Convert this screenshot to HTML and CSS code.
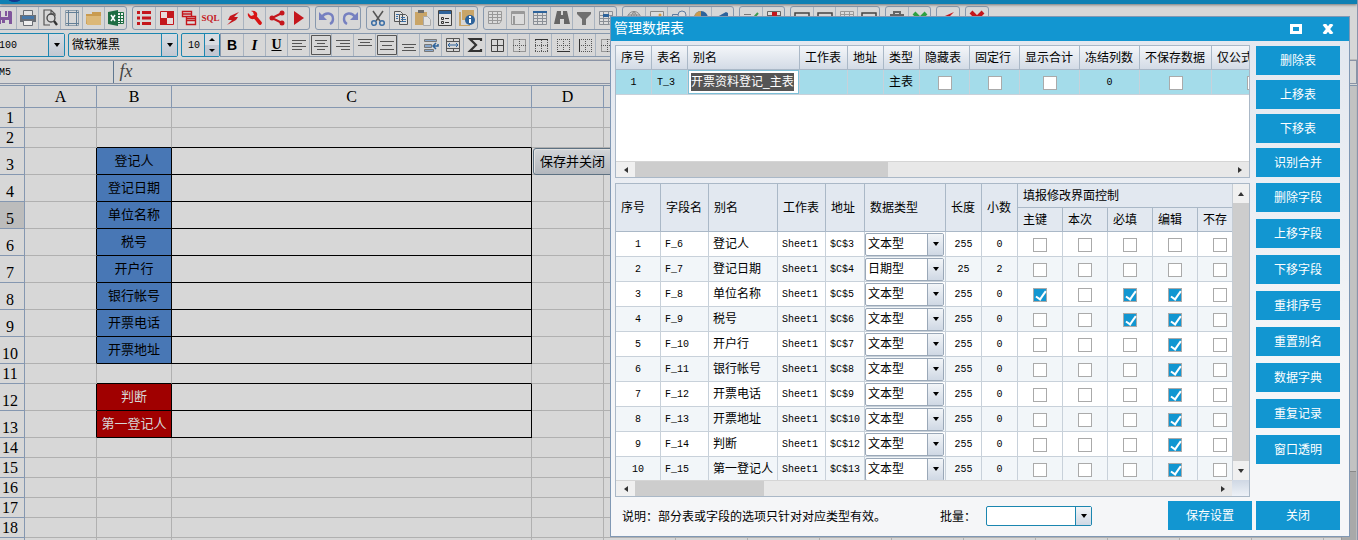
FILE: index.html
```html
<!DOCTYPE html>
<html lang="zh-CN">
<head>
    <meta charset="UTF-8">
    <meta name="viewport" content="width=device-width, initial-scale=1.0">
    <title>管理数据表</title>
    <link rel="stylesheet" href="styles.css">
</head>
<body>
    <!-- icon set -->
    <svg class="sprite" aria-hidden="true">
        <symbol id="save" viewBox="0 0 20 20"><path fill="#80569c" d="M3 3h13l1 1v12H3z"/><path fill="#d8d8d8" d="M6 3h7v6H6zM6 12h8v4H6z"/><path fill="#80569c" d="M10 3h2v5h-2zM7 12h3v3H7z"/></symbol>
        <symbol id="print" viewBox="0 0 20 20"><path fill="#6b6f75" d="M2 7h16v7H2z"/><path fill="#e4e4e4" stroke="#6b6f75" d="M5.5 2.500h9v5h-9z"/><path fill="#4577a8" d="M4 8h12v3H4z"/><path fill="#eee" stroke="#6b6f75" d="M5.500 12.500h9v5h-9z"/></symbol>
        <symbol id="preview" viewBox="0 0 20 20"><path fill="none" stroke="#555" stroke-width="1.200" d="M15 8V6l-4-4H4v15h6M11 2v4h4"/><circle cx="11" cy="10" r="4" fill="#d8d8d8" stroke="#444" stroke-width="1.300"/><path stroke="#333" stroke-width="2.400" d="m14 13 3 4"/></symbol>
        <symbol id="frame" viewBox="0 0 20 20"><path fill="none" stroke="#8fa0ae" d="M3.500 2.500h13v15h-13z"/><path fill="none" stroke="#637f96" d="M6.500 2v16M14.500 2v16M4 4.500h13M4 15.500h13"/></symbol>
        <symbol id="folder" viewBox="0 0 20 20"><path fill="#c99b50" d="M8 4h9v4H8zM2 6h8l1 2h6v8H2z"/><path fill="#dcb878" d="M2 8h15v9H3z"/></symbol>
        <symbol id="excel" viewBox="0 0 20 20"><path fill="#f3f3f3" stroke="#1e6c42" d="M9.500 4.500h8v11h-8z"/><path stroke="#1e6c42" d="M10 7.500h7M10 10.500h7M10 13.500h7M14.500 5v10"/><path fill="#1e6c42" d="m2 4 10-2v16L2 16z"/><path stroke="#fff" stroke-width="1.500" d="m5 7 4 6M9 7l-4 6"/></symbol>
        <symbol id="list" viewBox="0 0 20 20"><path fill="#c4161c" d="M3 3h3v3H3zM8 3h9v3H8zM3 8.500h3v3H3zM8 8.500h9v3H8zM3 14h3v3H3zM8 14h9v3H8z"/></symbol>
        <symbol id="checker" viewBox="0 0 20 20"><path fill="#e8dada" stroke="#c4161c" d="M3.500 3.500h13v13h-13z"/><path fill="#c4161c" d="M10 3h7v7h-7zM3 10h7v7H3z"/></symbol>
        <symbol id="stack" viewBox="0 0 20 20"><g fill="#ddd" stroke="#c4161c" stroke-width="1.400"><path d="M3.500 3.500h9v5h-9zM7.500 8.500h9v4h-9zM7.500 12.500h9v4h-9zM3.500 6h9M7.500 10.500h9"/></g></symbol>
        <symbol id="bolt" viewBox="0 0 20 20"><path fill="#c4161c" d="m16 4-9 4-2 4h4l-5 5 9-5 2-3h-4z"/></symbol>
        <symbol id="wrench" viewBox="0 0 20 20"><path fill="none" stroke="#d81414" stroke-width="3.600" stroke-linecap="round" d="m10 9 5 6"/><path fill="#d81414" d="M3 5l3 3 3-1-1-3-2-1c5-1 7 2 6 5l-3 3C5 12 2 8 3 5z"/></symbol>
        <symbol id="share" viewBox="0 0 20 20"><path fill="none" stroke="#c4161c" stroke-width="2" d="m15 5-10 5 10 5"/><g fill="#c4161c"><circle cx="15" cy="5" r="2.500"/><circle cx="5" cy="10" r="2.500"/><circle cx="15" cy="15" r="2.500"/></g></symbol>
        <symbol id="play" viewBox="0 0 20 20"><path fill="#c4161c" d="m5 3 10 7-10 7z"/></symbol>
        <symbol id="undo" viewBox="0 0 20 20"><path fill="none" stroke="#7680c0" stroke-width="2.400" d="M5 9c3-5 11-5 11 2 0 2-1 4-3 5"/><path fill="#7680c0" d="M2 4v8h8z"/></symbol>
        <symbol id="redo" viewBox="0 0 20 20"><path fill="none" stroke="#7680c0" stroke-width="2.400" d="M15 9C12 4 4 4 4 11c0 2 1 4 3 5"/><path fill="#7680c0" d="M18 4v8h-8z"/></symbol>
        <symbol id="cut" viewBox="0 0 20 20"><path stroke="#555" stroke-width="1.500" d="m5 3 7 10M15 3 8 13"/><g fill="none" stroke="#3a6ea5" stroke-width="1.500"><circle cx="6" cy="15" r="2.300"/><circle cx="14" cy="15" r="2.300"/></g></symbol>
        <symbol id="copy" viewBox="0 0 20 20"><g fill="#e2e2e2" stroke="#555"><path d="M3.500 3.500h6l2 2v8h-8zM8.500 6.500h6l2 2v8h-8z"/></g><path stroke="#3a6ea5" d="M5 6.500h3M5 8.500h2M5 10.500h2M10 9.500h4M10 11.500h5M10 13.500h5"/></symbol>
        <symbol id="paste" viewBox="0 0 20 20"><path fill="#c9a568" d="M2 4h12v13H2z"/><path fill="#6b6b6b" d="M5 2h6v3H5z"/><path fill="#e2e2e2" stroke="#aaa" d="M10.500 8.500h4l3 3v6h-7z"/></symbol>
        <symbol id="props" viewBox="0 0 20 20"><path fill="#e0e0e0" stroke="#444" d="M3.500 2.500h13v15h-13z"/><path fill="#2e639b" d="M4 3h12v3H4z"/><path stroke="#333" d="M10 10.500h4M10 14.500h4"/><path fill="none" stroke="#333" d="M6.500 9.500h2v2h-2zM6.500 13.500h2v2h-2z"/></symbol>
        <symbol id="info" viewBox="0 0 20 20"><path fill="#c9a568" d="M5 2h12v10H5zM2 4h2v13h9v1H2z"/><circle cx="13" cy="12" r="5" fill="#2e639b"/><path fill="#fff" d="M12 8h2v2h-2zM12 11h2v4h-2z"/></symbol>
        <symbol id="grid" viewBox="0 0 20 20"><path fill="#dcdcdc" stroke="#999" d="M3.500 3.500h13v9l-2 3h-11zM3.500 6.500h13M3.500 9.500h13M3.500 12.500h13M7.500 4v11M12.500 4v11"/></symbol>
        <symbol id="gridtop" viewBox="0 0 20 20"><path fill="#dcdcdc" stroke="#999" d="M3.500 3.500h13v13h-13z"/><path stroke="#999" stroke-width="2" d="M4 5h12M6 8v8"/></symbol>
        <symbol id="gridblue" viewBox="0 0 20 20"><path fill="#dcdcdc" stroke="#8a8f96" d="M3.500 3.500h13v13h-13zM3.500 7.500h13M3.500 10.500h13M3.500 13.500h13M7.500 4v12M12.500 4v12"/><path fill="#2e639b" d="M3 3h14v2H3z"/></symbol>
        <symbol id="gridcell" viewBox="0 0 20 20"><path fill="#dcdcdc" stroke="#8a8f96" d="M3.500 3.500h13v9l-3 4h-10zM3.500 7.500h13M3.500 10.500h13M3.500 13.500h11M7.500 4v12M12.500 4v12"/><path fill="#2e639b" d="M7 6h6v3H7z"/></symbol>
        <symbol id="find" viewBox="0 0 20 20"><path fill="#666" d="M5 3h4v4h2V3h4l3 13h-6v-5H8v5H2z"/></symbol>
        <symbol id="filter" viewBox="0 0 20 20"><path fill="#707070" d="M3 4h14v2l-5 5v6H8v-6L3 6z"/></symbol>
        <symbol id="globe" viewBox="0 0 20 20"><path fill="none" stroke="#888" d="M3.500 10a6.500 6.500 0 1 0 13 0 6.500 6.500 0 1 0-13 0M4 7h12M4 13h12M10 3.500v13M10 3.500c-4 4-4 9 0 13M10 3.500c4 4 4 9 0 13"/></symbol>
        <symbol id="image" viewBox="0 0 20 20"><path fill="#ddd" stroke="#888" d="M3.500 3.500h13v11h-13z"/><circle cx="13" cy="7" r="1.500" fill="#d89b40"/></symbol>
        <symbol id="shapes" viewBox="0 0 20 20"><path fill="none" stroke="#5c7ba0" d="M3.500 6.500h9v8h-9z"/><circle cx="13" cy="7" r="4" fill="#ddd" stroke="#5c7ba0"/></symbol>
        <symbol id="pie" viewBox="0 0 20 20"><circle cx="10" cy="10" r="7" fill="#2e639b"/><path fill="#c99b50" d="M10 10V3a7 7 0 0 0-7 7z"/></symbol>
        <symbol id="pen" viewBox="0 0 20 20"><path fill="#2e639b" d="m4 9 9-5 2 1v8H9z"/></symbol>
        <symbol id="tick" viewBox="0 0 20 20"><path fill="none" stroke="#3d9a50" stroke-width="2" d="m5 10 4 4 8-9"/><path stroke="#777" d="M3 6.500h7"/></symbol>
        <symbol id="palette" viewBox="0 0 20 20"><path fill="#ddd" stroke="#666" d="M3.500 3.500h13v11h-13zM3.500 7.500h13M8.500 3.500v11M12.500 3.500v11"/><path fill="#c4161c" d="M8 4h5v4H8z"/><path fill="#2e639b" d="M4 8h4v4H4z"/></symbol>
        <symbol id="box" viewBox="0 0 20 20"><path fill="none" stroke="#444" stroke-width="1.500" d="M3 5h14v10H3zM7 9h6"/></symbol>
        <symbol id="case" viewBox="0 0 20 20"><path fill="#666" d="M3 6h14v10H3z"/><path fill="none" stroke="#666" stroke-width="2" d="M7 6V4h6v2"/></symbol>
        <symbol id="crossgreen" viewBox="0 0 20 20"><path stroke="#2fa043" stroke-width="4" d="m4 5 12 12M16 5 4 17"/></symbol>
        <symbol id="crossred" viewBox="0 0 20 20"><path stroke="#c4161c" stroke-width="4" d="m4 4 12 12M16 4 4 16"/></symbol>
        <symbol id="al" viewBox="0 0 20 20"><path stroke="#555" d="M3 5.500h14M3 8.500h10M3 11.500h14M3 14.500h10"/></symbol>
        <symbol id="ac" viewBox="0 0 20 20"><path fill="none" stroke="#555" d="M.500.500h19v19H.500zM4 5.500h12M6 8.500h8M3 11.500h14M6 14.500h8"/></symbol>
        <symbol id="ar" viewBox="0 0 20 20"><path stroke="#555" d="M3 5.500h14M7 8.500h10M3 11.500h14M8 14.500h9"/></symbol>
        <symbol id="at" viewBox="0 0 20 20"><path stroke="#555" d="M3 4.500h14M5 7.500h10M3 10.500h14"/></symbol>
        <symbol id="am" viewBox="0 0 20 20"><path fill="none" stroke="#555" d="M.500.500h19v19H.500zM3 6.500h14M5 10.500h10M3 14.500h14"/></symbol>
        <symbol id="ab" viewBox="0 0 20 20"><path stroke="#555" d="M3 9.500h14M5 12.500h10M3 15.500h14"/></symbol>
        <symbol id="wrap" viewBox="0 0 20 20"><path fill="#8aa8cc" stroke="#777" d="M3.500 4.500h12v2h-12zM3.500 9.500h7v3h-7zM3.500 14.500h9v2h-9z"/><path fill="none" stroke="#2e639b" stroke-width="1.500" d="M17 9v2h-5m3-3-3 3 3 3"/></symbol>
        <symbol id="merge" viewBox="0 0 20 20"><path fill="none" stroke="#555" d="M3.500 3.500h13v13h-13zM3.500 6.500h13M3.500 13.500h13M10.500 3v3M10.500 14v3"/><path stroke="#2e639b" fill="none" d="M5 10h10M7 8l-2 2 2 2M13 8l2 2-2 2"/></symbol>
        <symbol id="sum" viewBox="0 0 20 20"><path fill="none" stroke="#333" stroke-width="2.200" d="M16 6V4H5l6 6-6 6h11v-2"/></symbol>
        <symbol id="ball" viewBox="0 0 20 20"><path fill="none" stroke="#444" d="M4.500 4.500h12v12h-12zM4.500 10.500h12M10.500 4.500v12"/></symbol>
        <symbol id="bnone" viewBox="0 0 20 20"><path fill="none" stroke="#555" stroke-dasharray="1 1" d="M4.500 4.500h12v12h-12zM4 10.500h13M10.500 4v13"/></symbol>
        <symbol id="btop" viewBox="0 0 20 20"><path stroke="#333" d="M4 4.500h13"/><path fill="none" stroke="#555" stroke-dasharray="1 1" d="M4.500 5v12M4 16.500h13M16.500 5v12M4 10.500h13M10.500 5v12"/></symbol>
        <symbol id="bbot" viewBox="0 0 20 20"><path stroke="#333" d="M4 16.500h13"/><path fill="none" stroke="#555" stroke-dasharray="1 1" d="M4.500 4v12M4 4.500h13M16.500 4v12M4 10.500h13M10.500 4v12"/></symbol>
        <symbol id="bleft" viewBox="0 0 20 20"><path stroke="#333" d="M4.500 4v13"/><path fill="none" stroke="#555" stroke-dasharray="1 1" d="M6 4.500h11M6 16.500h11M16.500 4v13M6 10.500h11M10.500 4v13"/></symbol>
    </svg>

    <div class="app">
        <div class="topbar"></div>

        <div class="toolbar toolbar-main" id="mainTools"></div>

        <div class="toolbar toolbar-format">
            <span class="combo combo-zoom"><select aria-label="缩放"><option>100</option></select></span>
            <span class="combo combo-font"><select aria-label="字体"><option>微软雅黑</option></select></span>
            <span class="spin"><input type="text" value="10" aria-label="字号"><span class="spin-arrows"></span></span>
            <div class="group" id="formatTools">
                <button class="bold">B</button>
                <button class="italic">I</button>
                <button class="underline">U</button>
            </div>
        </div>

        <div class="formula">
            <input class="name-box" type="text" value="M5" aria-label="名称框">
            <span class="fx">fx</span>
            <input class="formula-input" type="text" aria-label="公式">
        </div>

        <div class="sheet">
            <div class="sheet-view">
                <table class="cells" id="cells"></table>
            </div>
            <div class="sheet-scroll"><div class="sheet-thumb"></div></div>
        </div>
    </div>

    <div class="dialog">
        <div class="dialog-title">
            <h1>管理数据表</h1>
            <button class="win-btn" aria-label="最大化"><svg width="12" height="10" viewBox="0 0 12 10"><path fill="none" stroke="#fff" stroke-width="3" d="M1.500 1.500h9v7h-9z"/></svg></button>
            <button class="win-btn" aria-label="关闭窗口"><svg width="12" height="10" viewBox="0 0 12 10"><path stroke="#fff" stroke-width="3.500" d="m2 0 8 10M10 0 2 10"/></svg></button>
        </div>
        <div class="dialog-body">
            <div class="panels">
                <div class="panel">
                    <div class="view view-tables">
                        <table class="data tables">
                            <colgroup>
                                <col class="w36"><col class="w36"><col class="w112"><col class="w48"><col class="w36"><col class="w36">
                                <col class="w50"><col class="w50"><col class="w60"><col class="w60"><col class="w72"><col class="w84">
                            </colgroup>
                            <thead>
                                <tr><th>序号</th><th>表名</th><th>别名</th><th>工作表</th><th>地址</th><th>类型</th><th>隐藏表</th><th>固定行</th><th>显示合计</th><th>冻结列数</th><th>不保存数据</th><th>仅公式</th></tr>
                            </thead>
                            <tbody>
                                <tr>
                                    <td class="num">1</td>
                                    <td class="code">T_3</td>
                                    <td class="edit"><div class="edit-box"><span>开票资料登记_主表</span></div></td>
                                    <td></td>
                                    <td></td>
                                    <td>主表</td>
                                    <td class="check"><input type="checkbox" aria-label="隐藏表"></td>
                                    <td class="check"><input type="checkbox" aria-label="固定行"></td>
                                    <td class="check"><input type="checkbox" aria-label="显示合计"></td>
                                    <td class="num">0</td>
                                    <td class="check"><input type="checkbox" aria-label="不保存数据"></td>
                                    <td class="check"><input type="checkbox" aria-label="仅公式"></td>
                                </tr>
                            </tbody>
                        </table>
                    </div>
                    <div class="hscroll"><span class="arrow left"></span><div class="thumb thumb-wide"></div><span class="arrow right"></span></div>
                </div>

                <div class="panel panel-fields">
                    <div class="view view-fields">
                        <table class="data fields">
                            <colgroup>
                                <col class="w45"><col class="w48"><col class="w69"><col class="w48"><col class="w39"><col class="w81"><col class="w36"><col class="w36">
                                <col class="w45"><col class="w45"><col class="w45"><col class="w45"><col class="w45">
                            </colgroup>
                            <thead>
                                <tr>
                                    <th rowspan="2">序号</th><th rowspan="2">字段名</th><th rowspan="2">别名</th><th rowspan="2">工作表</th><th rowspan="2">地址</th><th rowspan="2">数据类型</th><th rowspan="2">长度</th><th rowspan="2">小数</th>
                                    <th colspan="5">填报修改界面控制</th>
                                </tr>
                                <tr><th>主键</th><th>本次</th><th>必填</th><th>编辑</th><th>不存</th></tr>
                            </thead>
                            <tbody id="fieldRows"></tbody>
                        </table>
                    </div>
                    <div class="vscroll"><span class="arrow up"></span><div class="thumb"></div><span class="arrow down"></span></div>
                    <div class="hscroll"><span class="arrow left"></span><div class="thumb thumb-short"></div><span class="arrow right"></span></div>
                    <div class="corner"></div>
                </div>
            </div>

            <div class="actions">
                <div class="actions-table">
                    <button class="btn">删除表</button>
                    <button class="btn">上移表</button>
                    <button class="btn">下移表</button>
                    <button class="btn">识别合并</button>
                </div>
                <div class="actions-field">
                    <button class="btn">删除字段</button>
                    <button class="btn">上移字段</button>
                    <button class="btn">下移字段</button>
                    <button class="btn">重排序号</button>
                    <button class="btn">重置别名</button>
                    <button class="btn">数据字典</button>
                    <button class="btn">重复记录</button>
                    <button class="btn">窗口透明</button>
                </div>
            </div>

            <div class="footer">
                <p>说明：部分表或字段的选项只针对对应类型有效。</p>
                <label for="batch">批量：</label>
                <span class="combo combo-batch"><select id="batch"><option></option></select></span>
                <button class="btn btn-save">保存设置</button>
            </div>
            <button class="btn btn-close">关闭</button>
        </div>
    </div>

    <script src="script.js"></script>
</body>
</html>
```
FILE: styles.css
```css
* { margin: 0; padding: 0; box-sizing: border-box; }
body { height: 100vh; overflow: hidden; background: #d7d7d7; font: 12px "Liberation Sans", "Noto Sans CJK SC", sans-serif; color: #000; }
button, input, select { font: inherit; color: inherit; background: none; border: none; border-radius: 0; outline: none; }
table { border-spacing: 0; table-layout: fixed; }
.sprite { position: absolute; width: 0; height: 0; }

/* main window */
.app { height: 100vh; display: flex; flex-direction: column; overflow: hidden; border-right: 1px solid #8a93ab; }
.topbar { position: relative; flex: none; height: 4px; background: #0f80b3; box-shadow: 0 1px 3px #777; overflow: hidden; }
.topbar::before { content: ""; position: absolute; left: 7px; top: -9px; width: 15px; height: 11px; border-radius: 50%; background: #12378c; }
.toolbar { display: flex; flex: none; height: 24px; }
.toolbar-main { margin: 2px 0 0 -7px; gap: 5px; }
.toolbar-format { margin: 3px 0 3px -5px; gap: 3px; }
.group { display: flex; flex: none; border: 1px solid #8798ad; border-radius: 3px; }
.group button { width: 22px; height: 22px; display: flex; align-items: center; justify-content: center; border-left: 1px solid #a9b3bf; }
.group button:first-child { border-left: none; }
.group svg { width: 20px; height: 20px; flex: none; }
.group .sql { font: bold 9px "Liberation Serif", serif; color: #c4161c; }
.group .bold { font: bold 14px "Liberation Sans", sans-serif; }
.group .italic { font: italic bold 15px "Liberation Serif", serif; }
.group .underline { font: bold 14px "Liberation Serif", serif; text-decoration: underline; }
#formatTools { margin-left: -3px; border-radius: 0; }

.combo { position: relative; display: inline-flex; flex: none; border: 1px solid #1b86b0; border-radius: 2px; }
.combo select { appearance: none; width: 100%; padding: 0 16px 0 3px; }
.combo::after { content: ""; position: absolute; top: 0; right: 0; bottom: 0; width: 15px; border-left: 1px solid #1b86b0; background: linear-gradient(#d8dde3, #c2c8d2); pointer-events: none; }
.combo::before { content: ""; position: absolute; z-index: 1; top: calc(50% - 2px); right: 4px; border: 3px solid transparent; border-top: 4px solid #000; border-bottom: none; pointer-events: none; }
.combo-zoom { width: 70px; font: 10px "Liberation Mono", monospace; }
.combo-font { width: 110px; }
.spin { display: flex; width: 39px; border: 1px solid #1b86b0; border-radius: 2px; }
.spin input { width: 22px; padding-left: 6px; font: 10px "Liberation Mono", monospace; }
.spin-arrows { position: relative; flex: 1; border-left: 1px solid #1b86b0; background: linear-gradient(#d8dde3 50%, #c2c8d2 50%); }
.spin-arrows::before, .spin-arrows::after { content: ""; position: absolute; left: 4px; border: 3px solid transparent; }
.spin-arrows::before { top: 4px; border-top: none; border-bottom: 3px solid #000; }
.spin-arrows::after { bottom: 4px; border-bottom: none; border-top: 3px solid #000; }

.formula { display: flex; flex: none; height: 24px; margin-bottom: 1px; border: 1px solid #8a93a5; border-left: none; box-shadow: 0 -1px 0 #bbb; }
.name-box { width: 115px; margin-left: -1px; border-right: 1px solid #607890; font: 10px "Liberation Mono", monospace; }
.fx { width: 24px; text-align: center; font: italic 18px/20px "Liberation Serif", serif; color: #444; }
.formula-input { flex: 1; min-width: 0; }

.sheet { flex: 1; min-height: 0; display: flex; border-top: 1px solid #7f93ab; }
.sheet-view { flex: 1; min-width: 0; overflow: hidden; }
.sheet-scroll { width: 16px; background: #c2c2c2; border-left: 1px solid #999; border-right: 1px solid #bbb; }
.sheet-thumb { height: 386px; border-bottom: 1px solid #888; box-shadow: 0 90px 0 #a9a9a9; }
.cells { width: 1396px; }
.cells th { height: 22px; border-right: 1px solid #8597b0; border-bottom: 1px solid #8597b0; font: 16px "Liberation Serif", serif; }
.cells tbody th { height: 20px; padding-right: 4px; line-height: 18px; vertical-align: bottom; }
.cells tbody th.current { background: #bcbcbc; }
.cells td { height: 20px; border-right: 1px solid #b0b0b0; border-bottom: 1px solid #b0b0b0; font-size: 13px; line-height: 18px; text-align: center; white-space: nowrap; }
.cells .tall th, .cells .tall td { height: 27px; }
.cells .box-b, .cells .edge-b { border-bottom-color: #000; }
.cells .box-r { border-right-color: #000; }
.cells .blue { background: #4877b5; }
.cells .red { background: #a00000; color: #d7d7d7; }
.cells .host { position: relative; }
.cell-btn { position: absolute; left: 1px; top: 0; width: 90px; height: 27px; padding-left: 6px; text-align: left; border: 1px solid #5d7182; border-radius: 3px; background: linear-gradient(#d2d5d8, #b3b7bd); box-shadow: inset 1px 1px 0 #e0e0e0; }
.c25 { width: 25px; }
.c72 { width: 72px; }
.c75 { width: 75px; }
.c360 { width: 360px; }

/* dialog */
.dialog { position: absolute; top: 16px; left: 610px; right: 8px; border: 1px solid #8098b4; background: linear-gradient(#e2e7ef, #f5f6f8 70%); }
.dialog-title { display: flex; align-items: center; height: 24px; padding: 0 15px 0 3px; gap: 20px; background: #1296d1; color: #fff; }
.dialog-title h1 { flex: 1; font-size: 14px; line-height: 20px; padding-bottom: 2px; font-weight: normal; }
.win-btn { width: 12px; height: 10px; display: flex; }
.dialog-body { display: grid; grid-template-columns: minmax(0, 1fr) 84px; gap: 4px 6px; padding: 4px 9px 6px 4px; }
.panels { display: flex; flex-direction: column; gap: 5px; min-width: 0; }
.panel { border: 1px solid #aab8c7; background: #fff; }
.panel-fields { display: grid; grid-template-columns: minmax(0, 1fr) 17px; }
.view { overflow: hidden; }
.view-tables { height: 115px; }
.view-fields { height: 296px; }
.data { line-height: 18px; white-space: nowrap; }
.data th { padding-left: 5px; border-right: 1px solid #aab8c7; border-bottom: 1px solid #aab8c7; font-weight: normal; text-align: left; }
.data td { height: 25px; padding-left: 4px; border-right: 1px solid #c8d1da; border-bottom: 1px solid #c8d1da; }
.data .num, .data .check { padding-left: 0; text-align: center; }
.data .num, .data .code { font: 10px "Liberation Mono", monospace; }
.tables { width: 680px; }
.tables th { height: 24px; background: linear-gradient(#f4f6f9, #d3dbe6); }
.tables td { padding-left: 5px; background: #a4dcea; }
.tables .edit { padding: 0; }
.edit-box { height: 24px; padding: 2px; border: 1px solid #7cc0d8; background: #fff; }
.edit-box span { display: inline-block; background: #555; color: #fff; }
.fields { width: 627px; }
.fields th { height: 24px; background: #e2e8f0; }
.fields tbody tr:nth-child(even) { background: #f2f6f9; }
.fields .type { padding: 0; }
.fields .combo { width: 79px; height: 23px; display: flex; border-color: #9aa8b8; background: #fff; }
.fields .combo select { padding-left: 2px; }
.combo-batch { width: 106px; height: 20px; background: #fff; }
.fields .combo::after, .combo-batch::after { background: linear-gradient(#f2f5f8, #cfd8e4); }
.fields .combo::after { border-color: #9aa8b8; }

input[type="checkbox"] { appearance: none; position: relative; width: 14px; height: 14px; border: 1px solid #aaa; background: #fff; vertical-align: middle; }
input[type="checkbox"]:checked { background: #1296d1; }
input[type="checkbox"]:checked::after { content: ""; position: absolute; left: 4px; top: 0; width: 4px; height: 9px; border: solid #fff; border-width: 0 2px 2px 0; transform: rotate(35deg); }

.hscroll { display: flex; height: 16px; border-top: 1px solid #d5d5d5; background: #e8e8e8; }
.vscroll { display: flex; flex-direction: column; border-left: 1px solid #c5ccd4; background: #e8e8e8; }
.vscroll .thumb { flex: 1; }
.thumb { background: #cdcdcd; }
.thumb-wide { width: 40%; }
.thumb-short { width: 21%; }
.corner { background: linear-gradient(#cfd8e4, #edf1f7); }
.arrow { flex: none; width: 19px; display: flex; align-items: center; justify-content: center; background: #f0f0f0; }
.arrow::before { content: ""; border: 4px solid transparent; }
.hscroll .arrow::before { border-width: 3px 4px; }
.hscroll .right { margin-left: auto; background: none; }
.vscroll .arrow { width: 16px; height: 19px; }
.vscroll .arrow::before { border-width: 4px 3px; }
.left::before { border-left: none !important; border-right-color: #333; }
.right::before { border-right: none !important; border-left-color: #333; }
.up::before { border-top: none !important; border-bottom-color: #333; }
.down::before { border-bottom: none !important; border-top-color: #333; }

.btn { width: 84px; height: 29px; flex: none; padding-bottom: 2px; background: #1296d1; color: #fff; cursor: pointer; }
.btn:hover { background: #0f88be; }
.actions { display: flex; flex-direction: column; gap: 6px; padding-top: 1px; }
.actions-table { display: flex; flex-direction: column; gap: 5px; }
.actions-field { display: flex; flex-direction: column; gap: 7px; }
.footer { display: flex; align-items: center; padding-left: 7px; min-width: 0; }
.footer p { margin-right: 54px; }
.footer label { margin-right: 10px; }
.btn-save { margin: 0 -2px 0 auto; }

.w36 { width: 36px; }
.w39 { width: 39px; }
.w45 { width: 45px; }
.w48 { width: 48px; }
.w50 { width: 50px; }
.w60 { width: 60px; }
.w69 { width: 69px; }
.w72 { width: 72px; }
.w81 { width: 81px; }
.w84 { width: 84px; }
.w112 { width: 112px; }
```
FILE: script.js
```js
// toolbar buttons, one array per group
const mainGroups = [
    ['save', 'print', 'preview', 'frame', 'folder', 'excel'],
    ['list', 'checker', 'stack', 'sql', 'bolt', 'wrench', 'share', 'play'],
    ['undo', 'redo'],
    ['cut', 'copy', 'paste', 'props', 'info'],
    ['grid', 'gridtop', 'gridblue', 'find', 'filter', 'gridcell'],
    ['globe', 'image', 'shapes', 'pie', 'pen'],
    ['tick', 'palette'],
    ['box', 'box', 'grid', 'box'],
    ['case', 'crossgreen'],
    ['bolt'],
    ['crossred']
];
const formatTools = ['al', 'ac', 'ar', 'at', 'am', 'ab', 'wrap', 'merge', 'sum', 'ball', 'bnone', 'btop', 'bbot', 'bleft', 'bnone'];

function iconButton(name) {
    if (name === 'sql') return '<button class="sql">SQL</button>';
    return `<button aria-label="${name}"><svg><use href="#${name}"/></svg></button>`;
}

document.querySelector('#mainTools').innerHTML = mainGroups
    .map(group => `<div class="group">${group.map(iconButton).join('')}</div>`).join('');
document.querySelector('#formatTools').insertAdjacentHTML('beforeend', formatTools.map(iconButton).join(''));

// sheet
const labels = {
    3: '登记人', 4: '登记日期', 5: '单位名称', 6: '税号', 7: '开户行', 8: '银行帐号',
    9: '开票电话', 10: '开票地址', 12: '判断', 13: '第一登记人'
};
const columns = 'ABCDEFGHIJKLMNO'.split('');
const widths = { B: 'c75', C: 'c360' };

let sheet = '<colgroup><col class="c25">' + columns.map(c => `<col class="${widths[c] || 'c72'}">`).join('') + '</colgroup>';
sheet += '<thead><tr><th></th>' + columns.map(c => `<th>${c}</th>`).join('') + '</tr></thead><tbody>';
for (let row = 1; row <= 18; row++) {
    const filled = labels[row] !== undefined;
    sheet += `<tr class="${filled ? 'tall' : ''}"><th class="${row === 5 ? 'current' : ''}">${row}</th>`;
    columns.forEach(c => {
        const cls = [];
        let text = '';
        if (c === 'A' && filled) cls.push('box-r');
        if (c === 'B' || c === 'C') {
            if (filled) cls.push('box-r', 'box-b');
            if (labels[row + 1]) cls.push('edge-b');
        }
        if (c === 'B' && filled) {
            cls.push(row < 11 ? 'blue' : 'red');
            text = labels[row];
        }
        if (c === 'D' && row === 3) {
            cls.push('host');
            text = '<button class="cell-btn">保存并关闭</button>';
        }
        sheet += `<td class="${cls.join(' ')}">${text}</td>`;
    });
    sheet += '</tr>';
}
// spare row that runs under the bottom edge
sheet += '<tr><th></th>' + '<td></td>'.repeat(columns.length) + '</tr>';
document.querySelector('#cells').innerHTML = sheet + '</tbody>';

// fields: name, alias, address, type, length, decimals, checked columns
const checks = ['主键', '本次', '必填', '编辑', '不存'];
const fields = [
    ['F_6', '登记人', '$C$3', '文本型', 255, 0, []],
    ['F_7', '登记日期', '$C$4', '日期型', 25, 2, []],
    ['F_8', '单位名称', '$C$5', '文本型', 255, 0, ['主键', '必填', '编辑']],
    ['F_9', '税号', '$C$6', '文本型', 255, 0, ['必填', '编辑']],
    ['F_10', '开户行', '$C$7', '文本型', 255, 0, ['编辑']],
    ['F_11', '银行帐号', '$C$8', '文本型', 255, 0, ['编辑']],
    ['F_12', '开票电话', '$C$9', '文本型', 255, 0, ['编辑']],
    ['F_13', '开票地址', '$C$10', '文本型', 255, 0, ['编辑']],
    ['F_14', '判断', '$C$12', '文本型', 255, 0, ['编辑']],
    ['F_15', '第一登记人', '$C$13', '文本型', 255, 0, ['编辑']]
];

document.querySelector('#fieldRows').innerHTML = fields.map((f, i) => `
    <tr>
        <td class="num">${i + 1}</td>
        <td class="code">${f[0]}</td>
        <td>${f[1]}</td>
        <td class="code">Sheet1</td>
        <td class="code">${f[2]}</td>
        <td class="type"><span class="combo"><select aria-label="数据类型"><option>${f[3]}</option></select></span></td>
        <td class="num">${f[4]}</td>
        <td class="num">${f[5]}</td>
        ${checks.map(c => `<td class="check"><input type="checkbox" aria-label="${c}"${f[6].includes(c) ? ' checked' : ''}></td>`).join('')}
    </tr>`).join('');
```
